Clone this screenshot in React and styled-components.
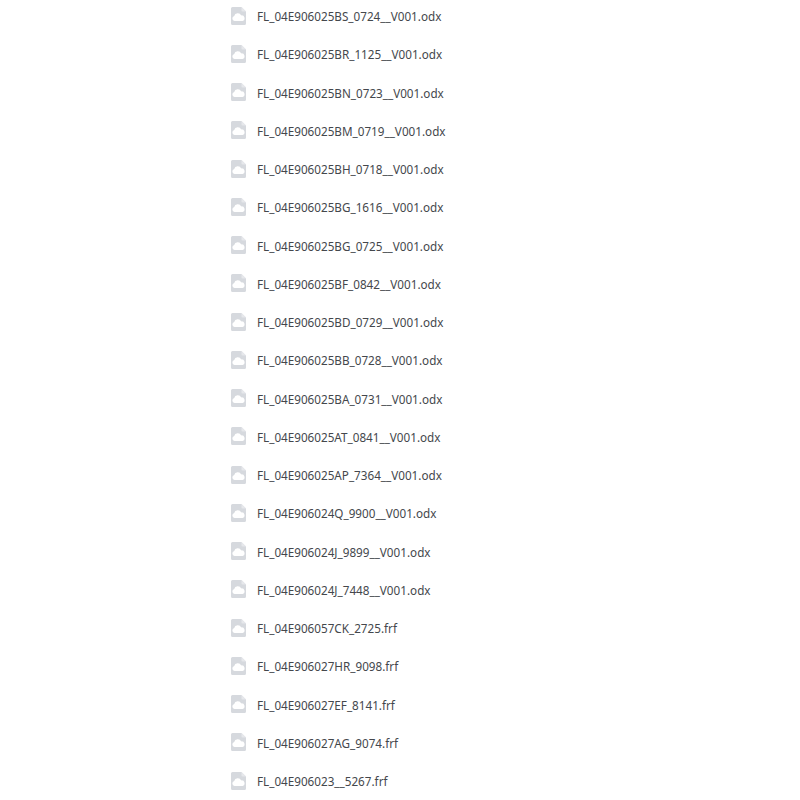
import React from "react";
import styled, { createGlobalStyle } from "styled-components";

const Global = createGlobalStyle`
  html, body { margin: 0; padding: 0; background: #fff; overflow: hidden; }
  body { height: 800px; }
`;

const List = styled.ul`
  list-style: none;
  margin: -3.4px 0 0;
  padding: 0 0 0 231px;
  display: flex;
  flex-direction: column;
`;

const Row = styled.li`
  height: 38.25px;
  display: flex;
  align-items: center;
  gap: 11px;
`;

const Name = styled.span`
  font-family: "Noto Sans", "Open Sans", sans-serif;
  font-size: 11.7px;
  color: #44474c;
  white-space: pre;
  padding-top: 1px;
`;

const FileIcon = () => (
  <svg width="15" height="18" viewBox="0 0 15 18" style={{ flex: "none" }}>
    <path
      d="M1.5 0H10.5L15 4.5V16.5A1.5 1.5 0 0 1 13.5 18H1.5A1.5 1.5 0 0 1 0 16.5V1.5A1.5 1.5 0 0 1 1.5 0Z"
      fill="#d6d9de"
    />
    <path d="M10.5 0L15 4.5H11.5A1 1 0 0 1 10.5 3.5Z" fill="#e6e8eb" />
    <path
      d="M3.6 14A2.5 2.5 0 0 1 3.2 9.1A3.7 3.7 0 0 1 10.2 8.4A2.9 2.9 0 0 1 11.6 14Z"
      fill="#fff"
    />
  </svg>
);

const files = [
  "FL_04E906025BS_0724__V001.odx",
  "FL_04E906025BR_1125__V001.odx",
  "FL_04E906025BN_0723__V001.odx",
  "FL_04E906025BM_0719__V001.odx",
  "FL_04E906025BH_0718__V001.odx",
  "FL_04E906025BG_1616__V001.odx",
  "FL_04E906025BG_0725__V001.odx",
  "FL_04E906025BF_0842__V001.odx",
  "FL_04E906025BD_0729__V001.odx",
  "FL_04E906025BB_0728__V001.odx",
  "FL_04E906025BA_0731__V001.odx",
  "FL_04E906025AT_0841__V001.odx",
  "FL_04E906025AP_7364__V001.odx",
  "FL_04E906024Q_9900__V001.odx",
  "FL_04E906024J_9899__V001.odx",
  "FL_04E906024J_7448__V001.odx",
  "FL_04E906057CK_2725.frf",
  "FL_04E906027HR_9098.frf",
  "FL_04E906027EF_8141.frf",
  "FL_04E906027AG_9074.frf",
  "FL_04E906023__5267.frf",
];

export default function App() {
  return (
    <>
      <Global />
      <List>
        {files.map((f) => (
          <Row key={f}>
            <FileIcon />
            <Name>{f}</Name>
          </Row>
        ))}
      </List>
    </>
  );
}
